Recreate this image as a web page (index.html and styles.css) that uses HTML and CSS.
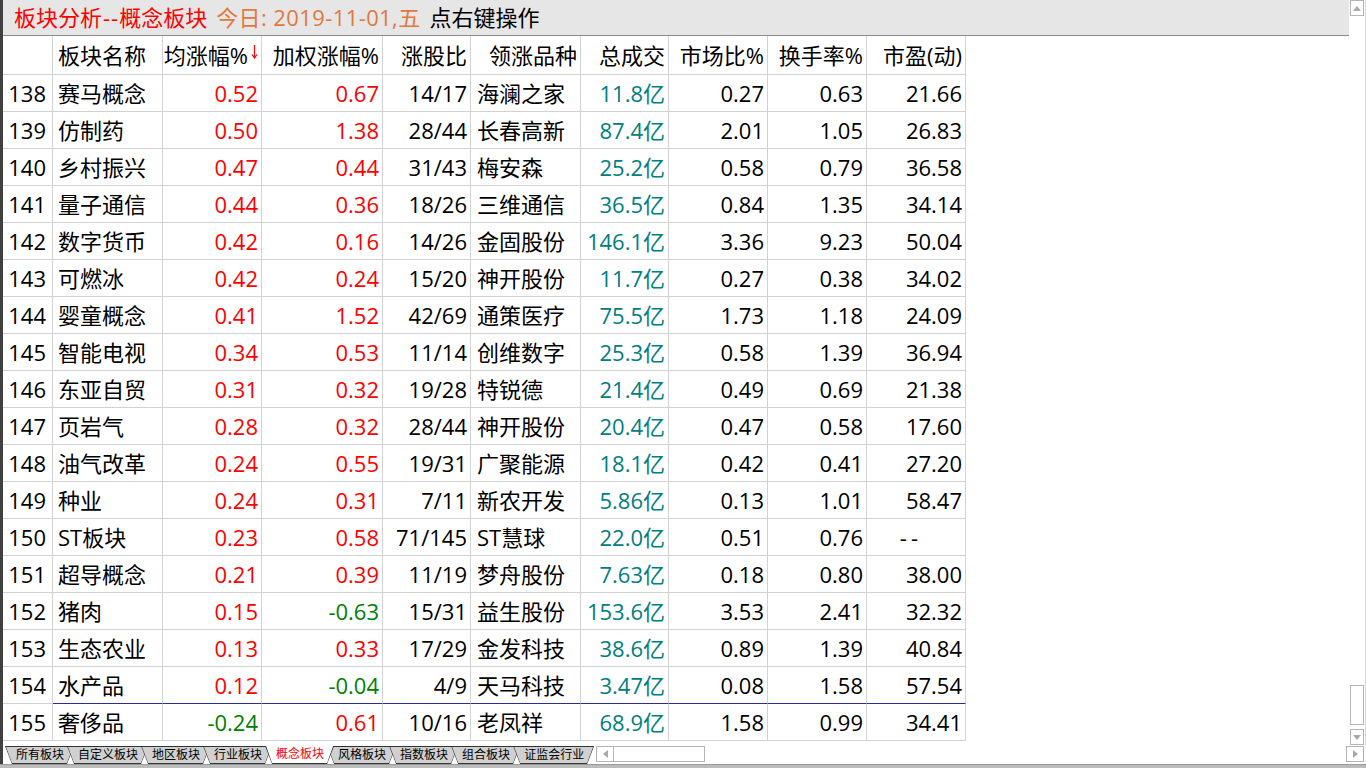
FILE: index.html
```html
<!DOCTYPE html>
<html lang="zh-CN">
<head>
<meta charset="utf-8">
<title>板块分析--概念板块</title>
<link rel="stylesheet" href="styles.css">
</head>
<body>
<div class="frame">
  <div class="main">
    <div class="content">
      <div class="titlebar"><span class="t-red">板块分析<span class="hy">--</span>概念板块</span><span class="t-orange">今日: 2019-11-01,五</span><span class="t-black">点右键操作</span></div>
      <div class="grid">
        <div class="row head">
          <div class="c idx"></div>
          <div class="c name">板块名称</div>
          <div class="c num sorted">均涨幅%<svg class="sortarrow" width="7" height="14" viewBox="0 0 7 14"><path d="M3.5 0 V12.5 M1 9.5 L3.5 13 L6 9.5" stroke="#f00" stroke-width="1.2" fill="none"/></svg></div>
          <div class="c num">加权涨幅%</div>
          <div class="c num">涨股比</div>
          <div class="c num">领涨品种</div>
          <div class="c num">总成交</div>
          <div class="c num">市场比%</div>
          <div class="c num">换手率%</div>
          <div class="c num">市盈(动)</div>
        </div>
        <div class="row"><div class="c idx">138</div><div class="c name">赛马概念</div><div class="c r">0.52</div><div class="c r">0.67</div><div class="c">14/17</div><div class="c lead">海澜之家</div><div class="c t">11.8亿</div><div class="c">0.27</div><div class="c">0.63</div><div class="c">21.66</div></div>
        <div class="row"><div class="c idx">139</div><div class="c name">仿制药</div><div class="c r">0.50</div><div class="c r">1.38</div><div class="c">28/44</div><div class="c lead">长春高新</div><div class="c t">87.4亿</div><div class="c">2.01</div><div class="c">1.05</div><div class="c">26.83</div></div>
        <div class="row"><div class="c idx">140</div><div class="c name">乡村振兴</div><div class="c r">0.47</div><div class="c r">0.44</div><div class="c">31/43</div><div class="c lead">梅安森</div><div class="c t">25.2亿</div><div class="c">0.58</div><div class="c">0.79</div><div class="c">36.58</div></div>
        <div class="row"><div class="c idx">141</div><div class="c name">量子通信</div><div class="c r">0.44</div><div class="c r">0.36</div><div class="c">18/26</div><div class="c lead">三维通信</div><div class="c t">36.5亿</div><div class="c">0.84</div><div class="c">1.35</div><div class="c">34.14</div></div>
        <div class="row"><div class="c idx">142</div><div class="c name">数字货币</div><div class="c r">0.42</div><div class="c r">0.16</div><div class="c">14/26</div><div class="c lead">金固股份</div><div class="c t">146.1亿</div><div class="c">3.36</div><div class="c">9.23</div><div class="c">50.04</div></div>
        <div class="row"><div class="c idx">143</div><div class="c name">可燃冰</div><div class="c r">0.42</div><div class="c r">0.24</div><div class="c">15/20</div><div class="c lead">神开股份</div><div class="c t">11.7亿</div><div class="c">0.27</div><div class="c">0.38</div><div class="c">34.02</div></div>
        <div class="row"><div class="c idx">144</div><div class="c name">婴童概念</div><div class="c r">0.41</div><div class="c r">1.52</div><div class="c">42/69</div><div class="c lead">通策医疗</div><div class="c t">75.5亿</div><div class="c">1.73</div><div class="c">1.18</div><div class="c">24.09</div></div>
        <div class="row"><div class="c idx">145</div><div class="c name">智能电视</div><div class="c r">0.34</div><div class="c r">0.53</div><div class="c">11/14</div><div class="c lead">创维数字</div><div class="c t">25.3亿</div><div class="c">0.58</div><div class="c">1.39</div><div class="c">36.94</div></div>
        <div class="row"><div class="c idx">146</div><div class="c name">东亚自贸</div><div class="c r">0.31</div><div class="c r">0.32</div><div class="c">19/28</div><div class="c lead">特锐德</div><div class="c t">21.4亿</div><div class="c">0.49</div><div class="c">0.69</div><div class="c">21.38</div></div>
        <div class="row"><div class="c idx">147</div><div class="c name">页岩气</div><div class="c r">0.28</div><div class="c r">0.32</div><div class="c">28/44</div><div class="c lead">神开股份</div><div class="c t">20.4亿</div><div class="c">0.47</div><div class="c">0.58</div><div class="c">17.60</div></div>
        <div class="row"><div class="c idx">148</div><div class="c name">油气改革</div><div class="c r">0.24</div><div class="c r">0.55</div><div class="c">19/31</div><div class="c lead">广聚能源</div><div class="c t">18.1亿</div><div class="c">0.42</div><div class="c">0.41</div><div class="c">27.20</div></div>
        <div class="row"><div class="c idx">149</div><div class="c name">种业</div><div class="c r">0.24</div><div class="c r">0.31</div><div class="c">7/11</div><div class="c lead">新农开发</div><div class="c t">5.86亿</div><div class="c">0.13</div><div class="c">1.01</div><div class="c">58.47</div></div>
        <div class="row"><div class="c idx">150</div><div class="c name">ST板块</div><div class="c r">0.23</div><div class="c r">0.58</div><div class="c">71/145</div><div class="c lead">ST慧球</div><div class="c t">22.0亿</div><div class="c">0.51</div><div class="c">0.76</div><div class="c dash">--</div></div>
        <div class="row"><div class="c idx">151</div><div class="c name">超导概念</div><div class="c r">0.21</div><div class="c r">0.39</div><div class="c">11/19</div><div class="c lead">梦舟股份</div><div class="c t">7.63亿</div><div class="c">0.18</div><div class="c">0.80</div><div class="c">38.00</div></div>
        <div class="row"><div class="c idx">152</div><div class="c name">猪肉</div><div class="c r">0.15</div><div class="c g">-0.63</div><div class="c">15/31</div><div class="c lead">益生股份</div><div class="c t">153.6亿</div><div class="c">3.53</div><div class="c">2.41</div><div class="c">32.32</div></div>
        <div class="row"><div class="c idx">153</div><div class="c name">生态农业</div><div class="c r">0.13</div><div class="c r">0.33</div><div class="c">17/29</div><div class="c lead">金发科技</div><div class="c t">38.6亿</div><div class="c">0.89</div><div class="c">1.39</div><div class="c">40.84</div></div>
        <div class="row sep"><div class="c idx">154</div><div class="c name">水产品</div><div class="c r">0.12</div><div class="c g">-0.04</div><div class="c">4/9</div><div class="c lead">天马科技</div><div class="c t">3.47亿</div><div class="c">0.08</div><div class="c">1.58</div><div class="c">57.54</div></div>
        <div class="row"><div class="c idx">155</div><div class="c name">奢侈品</div><div class="c g">-0.24</div><div class="c r">0.61</div><div class="c">10/16</div><div class="c lead">老凤祥</div><div class="c t">68.9亿</div><div class="c">1.58</div><div class="c">0.99</div><div class="c">34.41</div></div>
      </div>
    </div>
    <div class="vscroll">
      <div class="sbtn"><svg width="8" height="5" viewBox="0 0 8 5"><path d="M0 5 L4 0 L8 5 Z" fill="#a8a8a8"/></svg></div>
      <div class="track"><div class="thumb"></div></div>
      <div class="sbtn"><svg width="8" height="5" viewBox="0 0 8 5"><path d="M0 0 L4 5 L8 0 Z" fill="#a8a8a8"/></svg></div>
    </div>
  </div>
  <div class="tabbar">
    <div class="tabs">
      <div class="tab"><span>所有板块</span></div>
      <div class="tab"><span>自定义板块</span></div>
      <div class="tab"><span>地区板块</span></div>
      <div class="tab"><span>行业板块</span></div>
      <div class="tab active"><span>概念板块</span></div>
      <div class="tab"><span>风格板块</span></div>
      <div class="tab"><span>指数板块</span></div>
      <div class="tab"><span>组合板块</span></div>
      <div class="tab"><span>证监会行业</span></div>
    </div>
    <div class="hscroll">
      <div class="hbtn"><svg width="5" height="8" viewBox="0 0 5 8"><path d="M5 0 L0 4 L5 8 Z" fill="#a8a8a8"/></svg></div>
      <div class="htrack"></div>
    </div>
    <div class="hbtn endbtn"><svg width="5" height="8" viewBox="0 0 5 8"><path d="M0 0 L5 4 L0 8 Z" fill="#a8a8a8"/></svg></div>
  </div>
</div>
<div class="band"></div>
</body>
</html>
```

FILE: styles.css
```css
html, body {
  margin: 0;
  padding: 0;
  background: #fff;
}
body {
  width: 1366px;
  height: 768px;
  overflow: hidden;
  font-family: "Open Sans", "Noto Sans CJK SC", sans-serif;
  color: #000;
}
.frame {
  box-sizing: border-box;
  height: 764px;
  border-left: 3px solid #404040;
  display: flex;
  flex-direction: column;
}
.main {
  display: flex;
  height: 745px;
}
.content {
  flex: 1;
  min-width: 0;
}
.titlebar {
  box-sizing: border-box;
  height: 36px;
  background: #e6e6e6;
  border-bottom: 1px solid #8c8c8c;
  padding-left: 11px;
  font-size: 22px;
  line-height: 35px;
  white-space: nowrap;
}
.t-red { color: #f00; }
.t-red .hy { letter-spacing: 1px; padding-left: 1px; }
.t-orange { color: #e2783c; margin-left: 9px; letter-spacing: 0.4px; }
.t-black { color: #000; margin-left: 9px; }

.grid {
  width: 963px;
  font-size: 22px;
}
.row {
  display: grid;
  grid-template-columns: 50px 110px 99px 121px 88px 110px 88px 99px 99px 99px;
  height: 37px;
}
.row.head { height: 39px; }
.c {
  box-sizing: border-box;
  border-right: 1px solid #d2d2d2;
  border-bottom: 1px solid #d2d2d2;
  line-height: 36px;
  padding: 0 3px;
  text-align: right;
  white-space: nowrap;
  overflow: hidden;
}
.head .c { line-height: 38px; }
.c.idx { padding-right: 6px; }
.c.name { text-align: left; padding-left: 5px; }
.c.lead { text-align: left; padding-left: 6px; }
.c.dash { padding-right: 43px; letter-spacing: 4px; }
.sorted {
  display: flex;
  justify-content: flex-end;
  padding-right: 3px;
}
.sortarrow {
  margin: 9px 0 0 3px;
  flex: none;
}
.r { color: #f00; }
.g { color: #008000; }
.t { color: #008080; }
.sep .c:not(.idx) { border-bottom-color: #2c2c9c; }

.vscroll {
  box-sizing: border-box;
  width: 17px;
  padding: 0 1px;
  border-right: 1px solid #d8d8d8;
  display: flex;
  flex-direction: column;
}
.sbtn {
  box-sizing: border-box;
  width: 14px;
  height: 16px;
  border: 1px solid #b4b4b4;
  display: flex;
  align-items: center;
  justify-content: center;
}
.track {
  flex: 1;
  display: flex;
  flex-direction: column;
  justify-content: flex-end;
  padding-bottom: 4px;
}
.thumb {
  box-sizing: border-box;
  width: 14px;
  height: 40px;
  border: 1px solid #b4b4b4;
}

.tabbar {
  height: 19px;
  display: flex;
  align-items: flex-start;
  padding-top: 1px;
  box-sizing: border-box;
}
.tabs {
  display: flex;
  padding-left: 2px;
}
.tab {
  box-sizing: border-box;
  height: 18px;
  padding: 1px;
  background: #333;
  clip-path: polygon(0 0, 100% 0, calc(100% - 7px) 100%, 7px 100%);
  margin-left: -7px;
}
.tab:first-child { margin-left: 0; }
.tab span {
  display: block;
  height: 16px;
  line-height: 16px;
  padding: 0 9px 0 10px;
  background: #d0d0d0;
  clip-path: polygon(0 0, 100% 0, calc(100% - 6px) 100%, 6px 100%);
  font-size: 12px;
  white-space: nowrap;
}
.tab.active {
  position: relative;
  z-index: 1;
  padding-top: 0;
}
.tab.active span {
  height: 17px;
  background: #fff;
  color: #f00;
}
.hscroll {
  box-sizing: border-box;
  margin-left: 2px;
  width: 109px;
  height: 16px;
  border: 1px solid #b4b4b4;
  display: flex;
}
.hbtn {
  box-sizing: border-box;
  width: 17px;
  height: 14px;
  border-right: 1px solid #b4b4b4;
  display: flex;
  align-items: center;
  justify-content: center;
}
.htrack { flex: 1; }
.hbtn.endbtn {
  margin-left: auto;
  margin-right: 2px;
  width: 18px;
  height: 16px;
  border: 1px solid #b4b4b4;
}
.band {
  box-sizing: border-box;
  height: 4px;
  background: #bcbcbc;
  border-top: 1px solid #9a9a9a;
}
```
